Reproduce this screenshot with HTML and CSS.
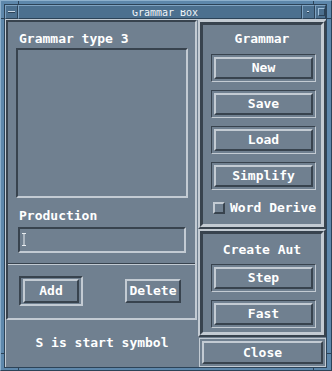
FILE: index.html
```html
<!DOCTYPE html>
<html>
<head>
<meta charset="utf-8">
<link rel="stylesheet" href="styles.css">
</head>
<body>
<div class="win">
  <span class="tick tick-tl-h"></span>
  <span class="tick tick-tr-h"></span>
  <span class="tick tick-bl-h"></span>
  <span class="tick tick-br-h"></span>
  <span class="tick tick-tl-v"></span>
  <span class="tick tick-tr-v"></span>
  <span class="tick tick-bl-v"></span>
  <span class="tick tick-br-v"></span>
  <div class="inner">
    <div class="titlebar">
      <div class="tb-btn tb-menu"><span class="tb-dash"></span></div>
      <div class="tb-title"><span class="tb-text">Grammar Box</span></div>
      <div class="tb-btn tb-min"><span class="tb-dot"></span></div>
      <div class="tb-btn tb-max"><span class="tb-square"></span></div>
    </div>
    <div class="client">
      <div class="leftcol">
        <div class="lpanel">
          <div class="label lbl-type">Grammar type 3</div>
          <div class="listbox"></div>
          <div class="label lbl-prod">Production</div>
          <div class="textfield">
            <svg class="ibeam" width="5" height="13" viewBox="0 0 5 13"><path d="M0 0.5H4M2 0.5V12.5M0 12.5H4" stroke="#e8ecf0" stroke-width="1" fill="none"/></svg>
          </div>
          <div class="separator"></div>
          <div class="btnrow">
            <div class="deframe"><div class="btn btn-add">Add</div></div>
            <div class="btn btn-del">Delete</div>
          </div>
        </div>
        <div class="status">S is start symbol</div>
      </div>
      <div class="rightcol">
        <div class="group group-gram">
          <div class="group-in">
            <div class="gtitle gt-gram">Grammar</div>
            <div class="btnstack">
              <div class="bframe"><div class="btn">New</div></div>
              <div class="bframe"><div class="btn">Save</div></div>
              <div class="bframe"><div class="btn">Load</div></div>
              <div class="bframe"><div class="btn">Simplify</div></div>
            </div>
            <div class="check"><span class="cbox"></span><span class="clabel">Word Derive</span></div>
          </div>
        </div>
        <div class="group group-aut">
          <div class="group-in">
            <div class="gtitle gt-aut">Create Aut</div>
            <div class="btnstack">
              <div class="bframe"><div class="btn">Step</div></div>
              <div class="bframe"><div class="btn">Fast</div></div>
            </div>
          </div>
        </div>
        <div class="closeframe"><div class="btn btn-close">Close</div></div>
      </div>
    </div>
  </div>
</div>
</body>
</html>
```
FILE: styles.css
```css
* { box-sizing: border-box; }
html, body { margin: 0; padding: 0; }
body {
  width: 332px;
  height: 371px;
  overflow: hidden;
  background: #5d87ab;
  font-family: "DejaVu Sans Mono", "Liberation Mono", monospace;
  font-weight: bold;
  font-size: 13px;
  line-height: 14px;
  color: #ffffff;
}
.win {
  position: relative;
  width: 332px;
  height: 371px;
  background: #5d87ab;
  border-top: 1px solid #8db0cd;
  border-left: 1px solid #8db0cd;
  border-right: 1px solid #2c4358;
  border-bottom: 1px solid #2c4358;
  padding: 3px 4px 2px 3px;
  display: flex;
}
.tick { position: absolute; background: #2c4358; }
.tick-tl-h { left: 17px; top: 0; width: 1px; height: 4px; }
.tick-tr-h { left: 312px; top: 0; width: 1px; height: 4px; }
.tick-bl-h { left: 17px; bottom: 0; width: 1px; height: 3px; }
.tick-br-h { left: 312px; bottom: 0; width: 1px; height: 3px; }
.tick-tl-v { left: 0; top: 17px; width: 4px; height: 1px; }
.tick-bl-v { left: 0; top: 352px; width: 4px; height: 1px; }
.tick-tr-v { right: 0; top: 17px; width: 5px; height: 1px; }
.tick-br-v { right: 0; top: 352px; width: 5px; height: 1px; }

.inner {
  flex: 1;
  border: 1px solid #2c4358;
  display: flex;
  flex-direction: column;
}
.titlebar {
  height: 14px;
  display: flex;
  background: #4c708f;
}
.tb-btn, .tb-title {
  border-top: 1px solid #7fa3c2;
  border-left: 1px solid #7fa3c2;
  border-bottom: 1px solid #2c4358;
  border-right: 1px solid #2c4358;
  position: relative;
}
.tb-menu { width: 13px; }
.tb-title { flex: 1; display: flex; justify-content: center; }
.tb-min { width: 13px; }
.tb-max { width: 11px; }
.tb-dash {
  position: absolute; left: 2px; top: 5px; width: 7px; height: 1px;
  background: #c9d8e6; box-shadow: 0 1px 0 #2c4358;
}
.tb-dot {
  position: absolute; left: 4px; top: 5px; width: 2px; height: 1px;
  background: #c9d8e6; box-shadow: 0 1px 0 #2c4358;
}
.tb-square {
  position: absolute; left: 2px; top: 2px; width: 7px; height: 8px;
  border-top: 1px solid #9fbfda; border-left: 1px solid #9fbfda;
  border-right: 1px solid #2c4358; border-bottom: 1px solid #2c4358;
}
.tb-text {
  display: block;
  margin-top: 4px;
  height: 7px;
  overflow: hidden;
  font-size: 10px;
  line-height: 6px;
  font-weight: normal;
  color: #f2f6fa;
  padding-left: 10px;
}

.client {
  flex: 1;
  display: flex;
  background: #708090;
  border-top: 1px solid #c3cbd3;
  border-left: 1px solid #c3cbd3;
}
.leftcol {
  width: 192px;
  display: flex;
  flex-direction: column;
}
.lpanel {
  width: 191px;
  height: 300px;
  border-top: 2px solid #38434e;
  border-left: 2px solid #38434e;
  border-right: 2px solid #c3cbd3;
  border-bottom: 2px solid #c3cbd3;
  display: flex;
  flex-direction: column;
}
.label { padding-left: 11px; }
.lbl-type { margin-top: 10px; }
.listbox {
  margin: 2px 0 0 8px;
  width: 172px;
  height: 150px;
  border-top: 2px solid #38434e;
  border-left: 2px solid #38434e;
  border-right: 2px solid #c3cbd3;
  border-bottom: 2px solid #c3cbd3;
}
.lbl-prod { margin-top: 11px; }
.textfield {
  margin: 4px 0 0 10px;
  width: 168px;
  height: 26px;
  border-top: 2px solid #38434e;
  border-left: 2px solid #38434e;
  border-right: 2px solid #c3cbd3;
  border-bottom: 2px solid #c3cbd3;
  padding: 4px 0 0 2px;
}
.ibeam { display: block; }
.separator {
  margin-top: 10px;
  height: 2px;
  border-top: 1px solid #38434e;
  border-bottom: 1px solid #c3cbd3;
}
.btnrow {
  display: flex;
  align-items: flex-start;
  margin-top: 11px;
}
.deframe {
  margin-left: 11px;
  width: 64px;
  border-top: 2px solid #38434e;
  border-left: 2px solid #38434e;
  border-right: 2px solid #c3cbd3;
  border-bottom: 2px solid #c3cbd3;
  padding: 1px 2px;
}
.btn {
  height: 22px;
  border-top: 2px solid #c3cbd3;
  border-left: 2px solid #c3cbd3;
  border-right: 2px solid #38434e;
  border-bottom: 2px solid #38434e;
  display: flex;
  align-items: center;
  justify-content: center;
  white-space: nowrap;
}
.btn-add { width: 56px; height: 24px; }
.btn-del { width: 56px; height: 24px; margin: 3px 0 0 42px; }
.status {
  flex: 1;
  display: flex;
  align-items: center;
  justify-content: center;
  padding-bottom: 1px;
}

.rightcol {
  width: 128px;
  display: flex;
  flex-direction: column;
}
.group {
  border-top: 2px solid #c3cbd3;
  border-left: 2px solid #c3cbd3;
  border-right: 2px solid #38434e;
  border-bottom: 2px solid #38434e;
}
.group-in {
  height: 100%;
  border-top: 3px solid #38434e;
  border-left: 3px solid #38434e;
  border-right: 3px solid #c3cbd3;
  border-bottom: 3px solid #c3cbd3;
  display: flex;
  flex-direction: column;
}
.group-gram { height: 209px; }
.group-aut { height: 108px; }
.gtitle { text-align: center; }
.gt-gram { margin-top: 7px; }
.gt-aut { margin-top: 9px; }
.btnstack {
  display: flex;
  flex-direction: column;
  gap: 8px;
  margin: 8px 0 0 8px;
}
.gt-aut + .btnstack { margin-top: 7px; }
.bframe {
  width: 105px;
  height: 28px;
  border-top: 1px solid #38434e;
  border-left: 1px solid #38434e;
  border-right: 1px solid #c3cbd3;
  border-bottom: 1px solid #c3cbd3;
  padding: 2px;
}
.check {
  display: flex;
  align-items: center;
  margin: 11px 0 0 10px;
  height: 14px;
}
.cbox {
  width: 12px;
  height: 12px;
  border-top: 2px solid #c3cbd3;
  border-left: 2px solid #c3cbd3;
  border-right: 2px solid #38434e;
  border-bottom: 2px solid #38434e;
  margin-right: 5px;
}
.closeframe {
  margin: 1px 0 0 1px;
  height: 29px;
  border: 1px solid #c3cbd3;
  padding: 2px;
}
.btn-close { height: 23px; }
```
